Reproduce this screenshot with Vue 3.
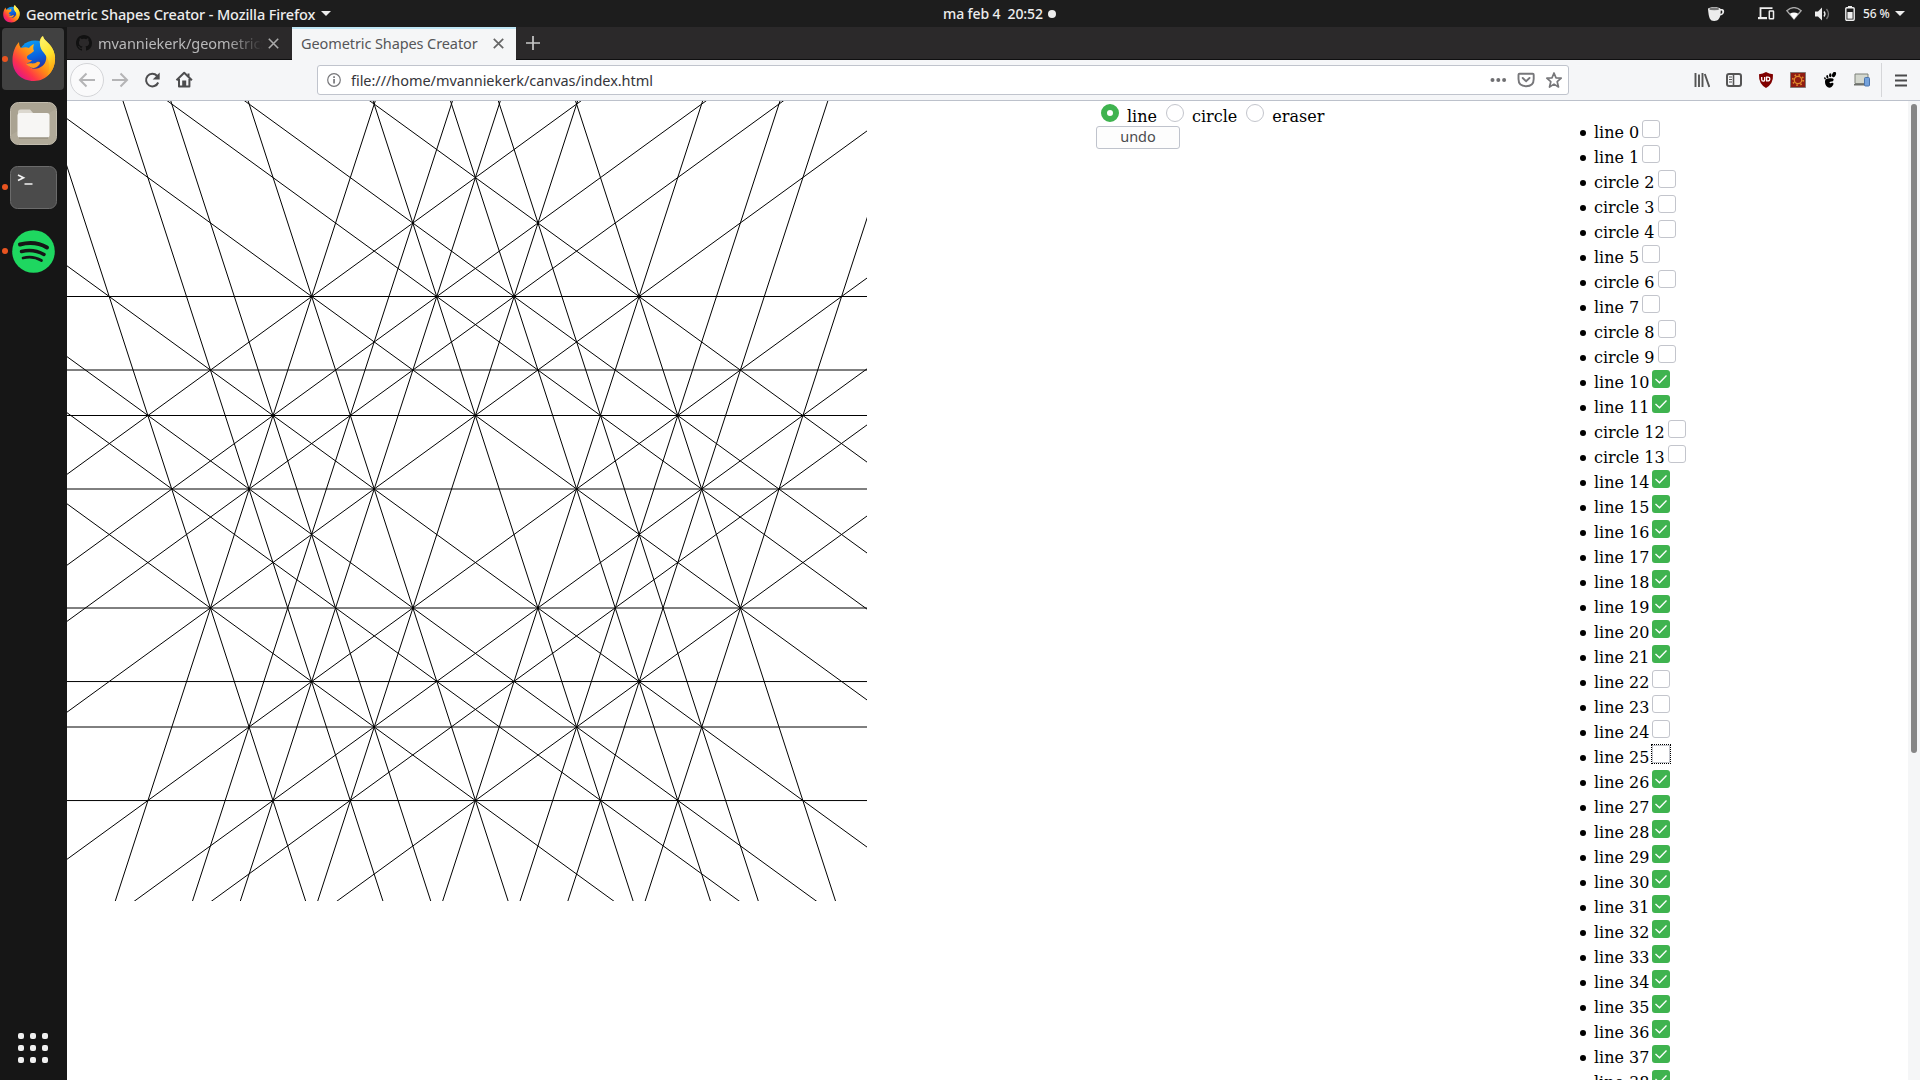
<script setup>
const W = 800
const CX = 408.4
const STEEP = Math.tan((72 * Math.PI) / 180)
const SHALLOW = Math.tan((36 * Math.PI) / 180)

const horizontals = [195.5, 269, 314.5, 388, 507, 580.55, 626, 699.55]
const steepPoints = [
  [42.2, 195.5], [143.4, 269], [206, 314.5], [244.7, 195.5],
  [345.8, 122], [408.4, 76.6], [471, 122], [572.1, 195.5],
]
const shallowPoints = [
  [244.7, 195.5], [369.7, 195.5], [345.8, 122], [408.4, 76.6],
  [42.2, 195.5], [81, 314.5], [105, 388], [143.4, 507],
]

const lines = []
for (const y of horizontals) lines.push({ x1: 0, y1: y, x2: W, y2: y })
for (const [x, y] of steepPoints) {
  const a = x - y / STEEP
  const b = x + (W - y) / STEEP
  lines.push({ x1: a, y1: 0, x2: b, y2: W })
  lines.push({ x1: 2 * CX - a, y1: 0, x2: 2 * CX - b, y2: W })
}
for (const [x, y] of shallowPoints) {
  const a = y - (x + 100) * SHALLOW
  const b = y + (W + 100 - x) * SHALLOW
  lines.push({ x1: -100, y1: a, x2: W + 100, y2: b })
  lines.push({ x1: 2 * CX + 100, y1: a, x2: 2 * CX - W - 100, y2: b })
}

const circles = [2, 3, 4, 6, 8, 9, 12, 13]
const hidden = [0, 1, 5, 7, 22, 23, 24, 25]
const shapes = Array.from({ length: 39 }, (_, i) => ({
  name: `${circles.includes(i) ? 'circle' : 'line'} ${i}`,
  on: !circles.includes(i) && !hidden.includes(i),
  focus: i === 25,
}))
const tools = ['line', 'circle', 'eraser']
const apps = [0, 1, 2, 3, 4, 5, 6, 7, 8]
</script>

<template>
  <div class="desktop">
    <svg width="0" height="0" class="defs">
      <defs>
        <linearGradient id="fox" x1="0.9" y1="0.1" x2="0.15" y2="0.9">
          <stop offset="0" stop-color="#fff44f" /><stop offset="0.3" stop-color="#ffbd20" />
          <stop offset="0.55" stop-color="#ff8a16" /><stop offset="0.8" stop-color="#ff3647" /><stop offset="1" stop-color="#e31587" />
        </linearGradient>
        <linearGradient id="globe" x1="0.3" y1="0" x2="0.6" y2="1">
          <stop offset="0" stop-color="#0a9cf5" /><stop offset="0.5" stop-color="#0a5fdc" /><stop offset="1" stop-color="#39167a" />
        </linearGradient>
        <linearGradient id="tail" x1="0.3" y1="0" x2="0.6" y2="1">
          <stop offset="0" stop-color="#fff36a" /><stop offset="0.5" stop-color="#ffe22b" /><stop offset="1" stop-color="#ff980e" />
        </linearGradient>
        <symbol id="firefox" viewBox="0 0 44 46">
          <circle cx="23" cy="22" r="17.5" fill="url(#globe)" />
          <path fill="url(#fox)" d="M7 6c0 3 1 5 2 6 3-1 6-1 8 0 1-2 3-3 5-4-1 3-1 5 0 7-3 3-7 4-7 6 0 3 3 3 5 3-1 2-3 3-5 3 2 5 7 7 12 5 5-2 8-7 7-12-1-4-5-7-6-12-1-4 1-7 3-8 0 5 10 7 12 20 1 14-8 25-21 25C9 45 0 36 .5 23 .7 17 3 10 7 6z" />
          <path fill="url(#tail)" d="M31 0c1 6 12 9 12 23 0 7-3 13-8 17 3-6 3-13 0-19-3-5-7-7-7-13 0-3 1-6 3-8z" />
          <path fill="#ff9a1c" d="M14 28c5-2 7 1 11-2 3-1 4 1 2 3-4 5-9 3-13-1z" />
        </symbol>
      </defs>
    </svg>

    <header class="topbar">
      <svg class="tb-fox" width="17" height="18"><use href="#firefox" /></svg>
      <span class="tb-title">Geometric Shapes Creator - Mozilla Firefox</span>
      <i class="caret c1"></i>
      <div class="clock"><span>ma feb 4&nbsp; 20:52</span><i></i></div>
      <div class="tray">
        <svg class="cup" width="17" height="15" viewBox="0 0 17 15"><path fill="#ececec" d="M0 3C0 .8 12.500.8 12.500 3h1.600c3 0 3 6-1.800 6.500C11.600 12 10.500 15 6.200 15S.8 12 0 3zm12.800 1.500-.3 3.300c2.200-.3 2.500-3.300.3-3.300z" /><ellipse cx="6.200" cy="3" rx="5" ry="1.200" fill="#777" /></svg>
        <svg class="dev" width="17" height="13" viewBox="0 0 17 13"><path d="M2.500 10V1.200h12" fill="none" stroke="#eee" stroke-width="1.800" /><path d="M0 10h9v2.200H0z" fill="#eee" /><rect x="11.300" y="4" width="4.200" height="7.700" rx=".5" fill="none" stroke="#eee" stroke-width="1.500" /></svg>
        <svg class="wifi" width="16" height="13" viewBox="0 0 16 13"><path d="M.8 3.700Q8-2.500 15.200 3.700L8 12z" fill="none" stroke="#aaa" stroke-width="1.300" /><path d="M3.800 6.800Q8 4 12.200 6.800L8 12.300z" fill="#fff" /></svg>
        <svg class="snd" width="15" height="14" viewBox="0 0 15 14"><path d="M0 4.500h3L7 .5v13L3 9.500H0z" fill="#eee" /><path d="M9 4.500q2 2.500 0 5" fill="none" stroke="#eee" stroke-width="1.300" /><path d="M11.500 2q4 5 0 10" fill="none" stroke="#777" stroke-width="1.300" /></svg>
        <svg class="bat" width="10" height="15" viewBox="0 0 10 15"><path d="M3 0h4v2H3z" fill="#eee" /><rect x=".8" y="1.800" width="8.400" height="12.400" rx="1" fill="none" stroke="#eee" stroke-width="1.400" /><path d="M2.400 6h5.200v6.700H2.400z" fill="#eee" /></svg>
        <span class="pct">56 %</span>
        <i class="caret"></i>
      </div>
    </header>

    <div class="body">
      <nav class="dock">
        <div class="app active"><i class="pip"></i><svg class="ff" width="44" height="46"><use href="#firefox" /></svg></div>
        <div class="app">
          <svg width="47" height="43" viewBox="0 0 47 43"><rect x=".5" y=".5" width="46" height="42" rx="8" fill="#aaa392" stroke="#c2bcae" /><path d="M1 33 46 7v27q0 8-8 8H9q-8 0-8-9z" fill="#b6b09f" opacity=".55" /><path d="M8 10q0-2.500 2.500-2.500H20l3.500 4v5H8z" fill="#dcd8cf" /><rect x="7.500" y="11" width="32" height="24.500" rx="2.500" fill="#f7f6f4" /><path d="M9 36h29" stroke="#8b8474" /></svg>
        </div>
        <div class="app"><i class="pip"></i>
          <svg width="47" height="43" viewBox="0 0 47 43"><rect x=".5" y=".5" width="46" height="42" rx="7" fill="#4b4b4b" stroke="#6b6b6b" /><path d="M8 9l5.500 2.700L8 14.500M14.500 18H22.500" fill="none" stroke="#f2f2f2" stroke-width="1.700" /></svg>
        </div>
        <div class="app"><i class="pip"></i>
          <svg width="43" height="43" viewBox="0 0 43 43"><circle cx="21.500" cy="21.500" r="21.300" fill="#1ed760" /><g fill="none" stroke="#161616" stroke-linecap="round"><path d="M8 14.500q15-4 27 3" stroke-width="4" /><path d="M9.500 21.500q12-3 22.500 3" stroke-width="3.400" /><path d="M11 28q10-2.500 18.500 2.500" stroke-width="2.700" /></g></svg>
        </div>
        <div class="grid"><i v-for="a in apps" :key="a"></i></div>
      </nav>

      <main class="window">
        <div class="tabs">
          <div class="tab">
            <svg class="gh" width="16" height="16" viewBox="0 0 16 16"><path fill="#111" d="M8 0C3.580 0 0 3.580 0 8c0 3.540 2.290 6.530 5.470 7.590.4.070.55-.17.55-.38 0-.19-.01-.82-.01-1.490-2.010.37-2.530-.49-2.690-.94-.09-.23-.48-.94-.82-1.130-.28-.15-.68-.52-.01-.53.63-.01 1.080.58 1.230.82.72 1.210 1.870.87 2.330.66.070-.52.28-.87.51-1.070-1.780-.2-3.640-.89-3.640-3.950 0-.87.31-1.590.82-2.150-.08-.2-.36-1.020.08-2.120 0 0 .67-.21 2.200.82.64-.18 1.320-.27 2-.27s1.360.09 2 .27c1.530-1.040 2.200-.82 2.200-.82.44 1.100.16 1.920.08 2.120.51.56.82 1.270.82 2.150 0 3.070-1.870 3.750-3.650 3.950.29.25.54.73.54 1.480 0 1.070-.01 1.930-.01 2.200 0 .21.15.46.55.38A8.010 8.010 0 0 0 16 8c0-4.420-3.580-8-8-8z" /></svg>
            <span class="t1">mvanniekerk/geometricS</span>
            <svg class="x" width="11" height="11" viewBox="0 0 11 11"><path d="M.8.8l9.400 9.400M10.200.8.8 10.200" stroke="#aaa" stroke-width="1.600" /></svg>
          </div>
          <div class="tab on">
            <span class="t2">Geometric Shapes Creator</span>
            <svg class="x" width="11" height="11" viewBox="0 0 11 11"><path d="M.8.8l9.400 9.400M10.200.8.8 10.200" stroke="#666" stroke-width="1.700" /></svg>
          </div>
          <svg class="plus" width="14" height="14" viewBox="0 0 14 14"><path d="M7 0v14M0 7h14" stroke="#c8c8c8" stroke-width="1.700" /></svg>
        </div>

        <div class="toolbar">
          <svg class="nav" width="130" height="40" viewBox="0 0 130 40">
            <circle cx="20" cy="20" r="16.500" fill="#fafafb" stroke="#d4d5d8" />
            <path d="M28 20H13M19.500 13.500 13 20l6.500 6.500" fill="none" stroke="#b4b4b6" stroke-width="2" />
            <path d="M45 20h15M53.500 13.500 60 20l-6.500 6.500" fill="none" stroke="#b4b4b6" stroke-width="2" />
            <path d="M91.200 22.500A6.300 6.300 0 1 1 90 15.800" fill="none" stroke="#4d4d4f" stroke-width="2" /><path d="M92.700 12.500v7h-7z" fill="#4d4d4f" />
            <path d="M109.500 20.300 117.200 12.700 124.900 20.300M112 19v7.500h10.400V19" fill="none" stroke="#4d4d4f" stroke-width="2" stroke-linejoin="round" /><path d="M115.200 20.500h4v6h-4zM120.500 13.500h2v3h-2z" fill="#4d4d4f" />
          </svg>
          <div class="url">
            <svg width="14" height="14" viewBox="0 0 14 14"><circle cx="7" cy="7" r="6.300" fill="none" stroke="#77777a" stroke-width="1.200" /><path d="M6.200 6h1.700v4.500H6.200zM6.200 3.300h1.700V5H6.200z" fill="#77777a" /></svg>
            <span class="addr">file:///home/mvanniekerk/canvas/index.html</span>
            <svg class="acts" width="73" height="18" viewBox="-7 0 73 18">
              <g fill="#6f6f72"><circle cx="-4.500" cy="9" r="2" /><circle cx="1.300" cy="9" r="2" /><circle cx="7.100" cy="9" r="2" /></g>
              <path transform="translate(-7.300 0)" d="M29.800 2.700h13.200q1 0 1 1V8q0 7.200-7.600 7.200T28.800 8V3.700q0-1 1-1z" fill="none" stroke="#77777a" stroke-width="1.900" /><path transform="translate(-7.300 0)" d="M33 7l3.400 3.200L39.800 7" fill="none" stroke="#77777a" stroke-width="1.900" stroke-linecap="round" />
              <path d="M58 2l2 4.800 5.200.4-4 3.500 1.300 5.300-4.500-2.900L53.500 16l1.300-5.300-4-3.500 5.200-.4z" transform="translate(-1 0)" fill="none" stroke="#77777a" stroke-width="1.700" stroke-linejoin="round" />
            </svg>
          </div>
          <div class="ext">
            <svg width="16" height="16" viewBox="0 0 16 16"><path d="M1.500 1v14M5 2.500V15M8.500 1v14M10.800 2 15.300 15" stroke="#555" stroke-width="1.900" /></svg>
            <svg width="16" height="16" viewBox="0 0 16 16"><rect x="1" y="2" width="14" height="12" rx="2" fill="none" stroke="#555" stroke-width="2" /><path d="M7.500 2v12" stroke="#555" stroke-width="1.600" /><path d="M3 5h3M3 7.500h3M3 10h3" stroke="#555" /></svg>
            <svg width="16" height="16" viewBox="0 0 16 16"><path d="M8 0q3 2 7 2.300Q15.500 12 8 16 .5 12 1 2.300 5 2 8 0z" fill="#800000" /><path d="M3.700 5v2.500q0 1.700 1.500 1.700t1.500-1.700V5" fill="none" stroke="#fff" stroke-width="1.300" /><path d="M8.600 5.200v3.700h1.200q2 0 2-1.900t-2-1.800z" fill="none" stroke="#fff" stroke-width="1.300" /></svg>
            <svg width="16" height="16" viewBox="0 0 16 16"><path d="M.5.5h15v15H.5z" fill="#8f1c12" stroke="#857b78" /><circle cx="8" cy="8" r="3.700" fill="none" stroke="#e08a2c" stroke-width="1.300" /><circle cx="8" cy="8" r="5.200" fill="none" stroke="#e08a2c" stroke-width="1.800" stroke-dasharray="1.500 2.580" /></svg>
            <svg width="16" height="16" viewBox="0 0 16 16"><path d="M3 9.300Q3 6.300 8 6.200q5-.2 3.200 2.500c-1 1.300-2.700.4-3.500 1.400-.6 1 .6 1.500 1.700.8 1.800-.8 2.600.3 1.700 2C10 15 8 16.400 5.800 15.300 3.300 14 3 11.500 3 9.300z" fill="#000" /><g fill="#000"><ellipse cx="12" cy="2.500" rx="1.800" ry="2.800" transform="rotate(25 12 2.500)" /><ellipse cx="8.300" cy="3.300" rx="1.200" ry="2" /><ellipse cx="5.300" cy="4.700" rx="1" ry="1.600" transform="rotate(-15 5.300 4.700)" /><ellipse cx="3" cy="6.300" rx=".8" ry="1.200" transform="rotate(-25 3 6.300)" /></g></svg>
            <svg width="16" height="16" viewBox="0 0 16 16"><path d="M1 2h13v9.500H1z" fill="#d4d8cf" stroke="#7d817b" /><path d="M0 12h12v1.500H0z" fill="#6d706c" /><rect x="10.500" y="5.500" width="5" height="8.500" rx="1" fill="#74a2dc" stroke="#4b74ac" /></svg>
          </div>
          <i class="sep"></i>
          <svg class="burger" width="12" height="13" viewBox="0 0 12 13"><path d="M0 1.500h12M0 6.500h12M0 11.500h12" stroke="#4a4a4c" stroke-width="2" /></svg>
        </div>

        <div class="page">
          <svg class="canvas" width="800" height="800" viewBox="0 0 800 800">
            <line v-for="(l, i) in lines" :key="i" v-bind="l" stroke="#000" stroke-width="1" />
          </svg>
          <section class="tools">
            <div class="radios">
              <label v-for="(t, i) in tools" :key="t"><i :class="{ sel: i === 0 }"></i><span>{{ t }}</span></label>
            </div>
            <button>undo</button>
          </section>
          <ul class="shapes">
            <li v-for="s in shapes" :key="s.name">
              <b></b><span>{{ s.name }}</span>
              <i :class="{ on: s.on, focus: s.focus }">
                <svg v-if="s.on" width="18" height="18" viewBox="0 0 18 18"><path d="M3.500 9l4 3.800L14.500 5.500" fill="none" stroke="#fff" stroke-width="1.300" /></svg>
              </i>
            </li>
          </ul>
          <div class="scroll"><i></i></div>
        </div>
      </main>
    </div>
  </div>
</template>

<style>
body { margin: 0; overflow: hidden; }
</style>

<style scoped>
.desktop { width: 1920px; height: 1080px; display: flex; flex-direction: column; overflow: hidden; background: #171717; font-family: "Noto Sans", sans-serif; }
.defs { position: absolute; }
svg { display: block; flex: none; }
.topbar { height: 27px; flex: none; background: #1d1d1d; display: flex; align-items: center; color: #ededed; font-size: 14px; white-space: nowrap; position: relative; }
.tb-fox { margin-left: 3px; }
.tb-title { margin-left: 6px; width: 289px; font-weight: 500; font-size: 14.5px; letter-spacing: -0.12px; }
.caret { border: 5px solid transparent; border-top-color: #ededed; border-bottom: 0; }
.c1 { margin-left: 6px; }
.clock { margin-left: 612px; display: flex; align-items: center; font-weight: 500; }
.clock span { width: 101px; letter-spacing: -0.1px; }
.clock i { width: 8px; height: 8px; border-radius: 50%; background: #ededed; margin-left: 4px; }
.tray { margin-left: auto; margin-right: 15px; display: flex; align-items: center; }
.cup { margin-right: 33px; }
.dev { margin-right: 11px; }
.wifi { margin-right: 13px; }
.snd { margin-right: 15px; }
.bat { margin-right: 8px; }
.pct { width: 27px; font-size: 12px; font-weight: 500; margin-right: 5px; letter-spacing: -0.1px; }

.body { flex: 1; display: flex; min-height: 0; }
.dock { width: 67px; box-sizing: border-box; padding: 1px 3px 0 2px; display: flex; flex-direction: column; gap: 2px; background: #161616; }
.app { height: 62px; width: 62px; border-radius: 4px; display: flex; align-items: center; justify-content: center; position: relative; }
.app.active { background: #414141; }
.app > svg { margin-left: 1px; }
.pip { position: absolute; left: 0; top: 28px; width: 6px; height: 6px; border-radius: 50%; background: #e95420; }
.grid { margin: auto auto 17px 16px; display: grid; grid-template-columns: repeat(3, 6px); gap: 6px 6px; }
.grid i { width: 6px; height: 6px; border-radius: 2px; background: #f0f0f0; }

.window { flex: 1; min-width: 0; display: flex; flex-direction: column; background: #fff; }
.tabs { height: 33px; flex: none; box-sizing: border-box; background: #2b292a; border-bottom: 1px solid #0f0f10; display: flex; align-items: center; font-size: 14.5px; white-space: nowrap; }
.tab { width: 225px; height: 32px; box-sizing: border-box; display: flex; align-items: center; padding-left: 9px; color: #b9b9ba; }
.t1 { margin-left: 6px; width: 165px; overflow: hidden; letter-spacing: -0.05px; -webkit-mask-image: linear-gradient(90deg, #000 78%, transparent); mask-image: linear-gradient(90deg, #000 78%, transparent); }
.x { margin-left: 5px; }
.tab.on { width: 224px; height: 33px; margin-bottom: -1px; background: #f5f6f7; border-top: 2px solid #bfe6f5; box-shadow: 0 -1px #1c1c1c; color: #555659; }
.t2 { width: 177px; letter-spacing: -0.1px; padding-bottom: 3px; }
.tab.on .x { margin-left: 15px; margin-bottom: 2px; }
.plus { margin-left: 10px; }

.toolbar { height: 41px; flex: none; box-sizing: border-box; background: #f5f6f8; border-bottom: 1px solid #bcc1cb; display: flex; align-items: center; }
.url { width: 1252px; height: 30px; box-sizing: border-box; border: 1px solid #c0c4cd; border-radius: 3px; background: #fff; margin-left: 120px; display: flex; align-items: center; padding-left: 9px; font-size: 14.5px; color: #35353a; }
.addr { margin-left: 10px; white-space: nowrap; letter-spacing: -0.05px; }
.acts { margin-left: auto; margin-right: 5px; }
.ext { display: flex; gap: 16px; margin-left: 125px; }
.sep { width: 1px; height: 34px; background: #d5d6d9; margin-left: 11px; }
.burger { margin-left: 13px; }

.page { flex: 1; min-height: 0; display: flex; overflow: hidden; font-family: "DejaVu Serif", serif; font-size: 16px; color: #000; }
.tools { margin-left: 229px; width: 465px; }
.radios { display: flex; height: 25px; padding: 3px 0 0 5px; box-sizing: border-box; }
.radios label { display: flex; height: 19px; }
.radios i { width: 18px; height: 18px; box-sizing: border-box; border: 1px solid #c3c5cc; border-radius: 50%; background: #fff; flex: none; }
.radios i.sel { border: 6px solid #3fb34f; }
.radios span { line-height: 19px; margin: 3px 9px 0 8px; white-space: nowrap; }
button { display: block; width: 84px; height: 23px; border: 1px solid #bfc3cc; border-radius: 3px; background: #fdfdfd; padding: 0 0 2px; font: 14.500px/19px "Noto Sans", sans-serif; color: #4b4b4d; }
.shapes { margin: 16px 0 0 19px; padding: 0; list-style: none; width: 327px; }
.shapes li { height: 25px; display: flex; }
.shapes b { width: 6px; height: 6px; border-radius: 50%; background: #000; margin: 13px 8px 0 0; }
.shapes span { line-height: 19px; margin-top: 6px; white-space: nowrap; }
.shapes i { width: 18px; height: 18px; box-sizing: border-box; border: 1px solid #c3c5cc; border-radius: 3px; margin: 3px 0 0 3px; }
.shapes i.on { border: 0; background: #3fb34f; }
.shapes i.focus { outline: 1px dotted #000; border-radius: 0; }
.scroll { margin-left: auto; width: 12px; box-sizing: border-box; background: #f5f6f7; padding: 3px 2px 0 3px; }
.scroll i { display: block; height: 649px; width: 6px; border-radius: 3px; background: #868686; }
</style>
